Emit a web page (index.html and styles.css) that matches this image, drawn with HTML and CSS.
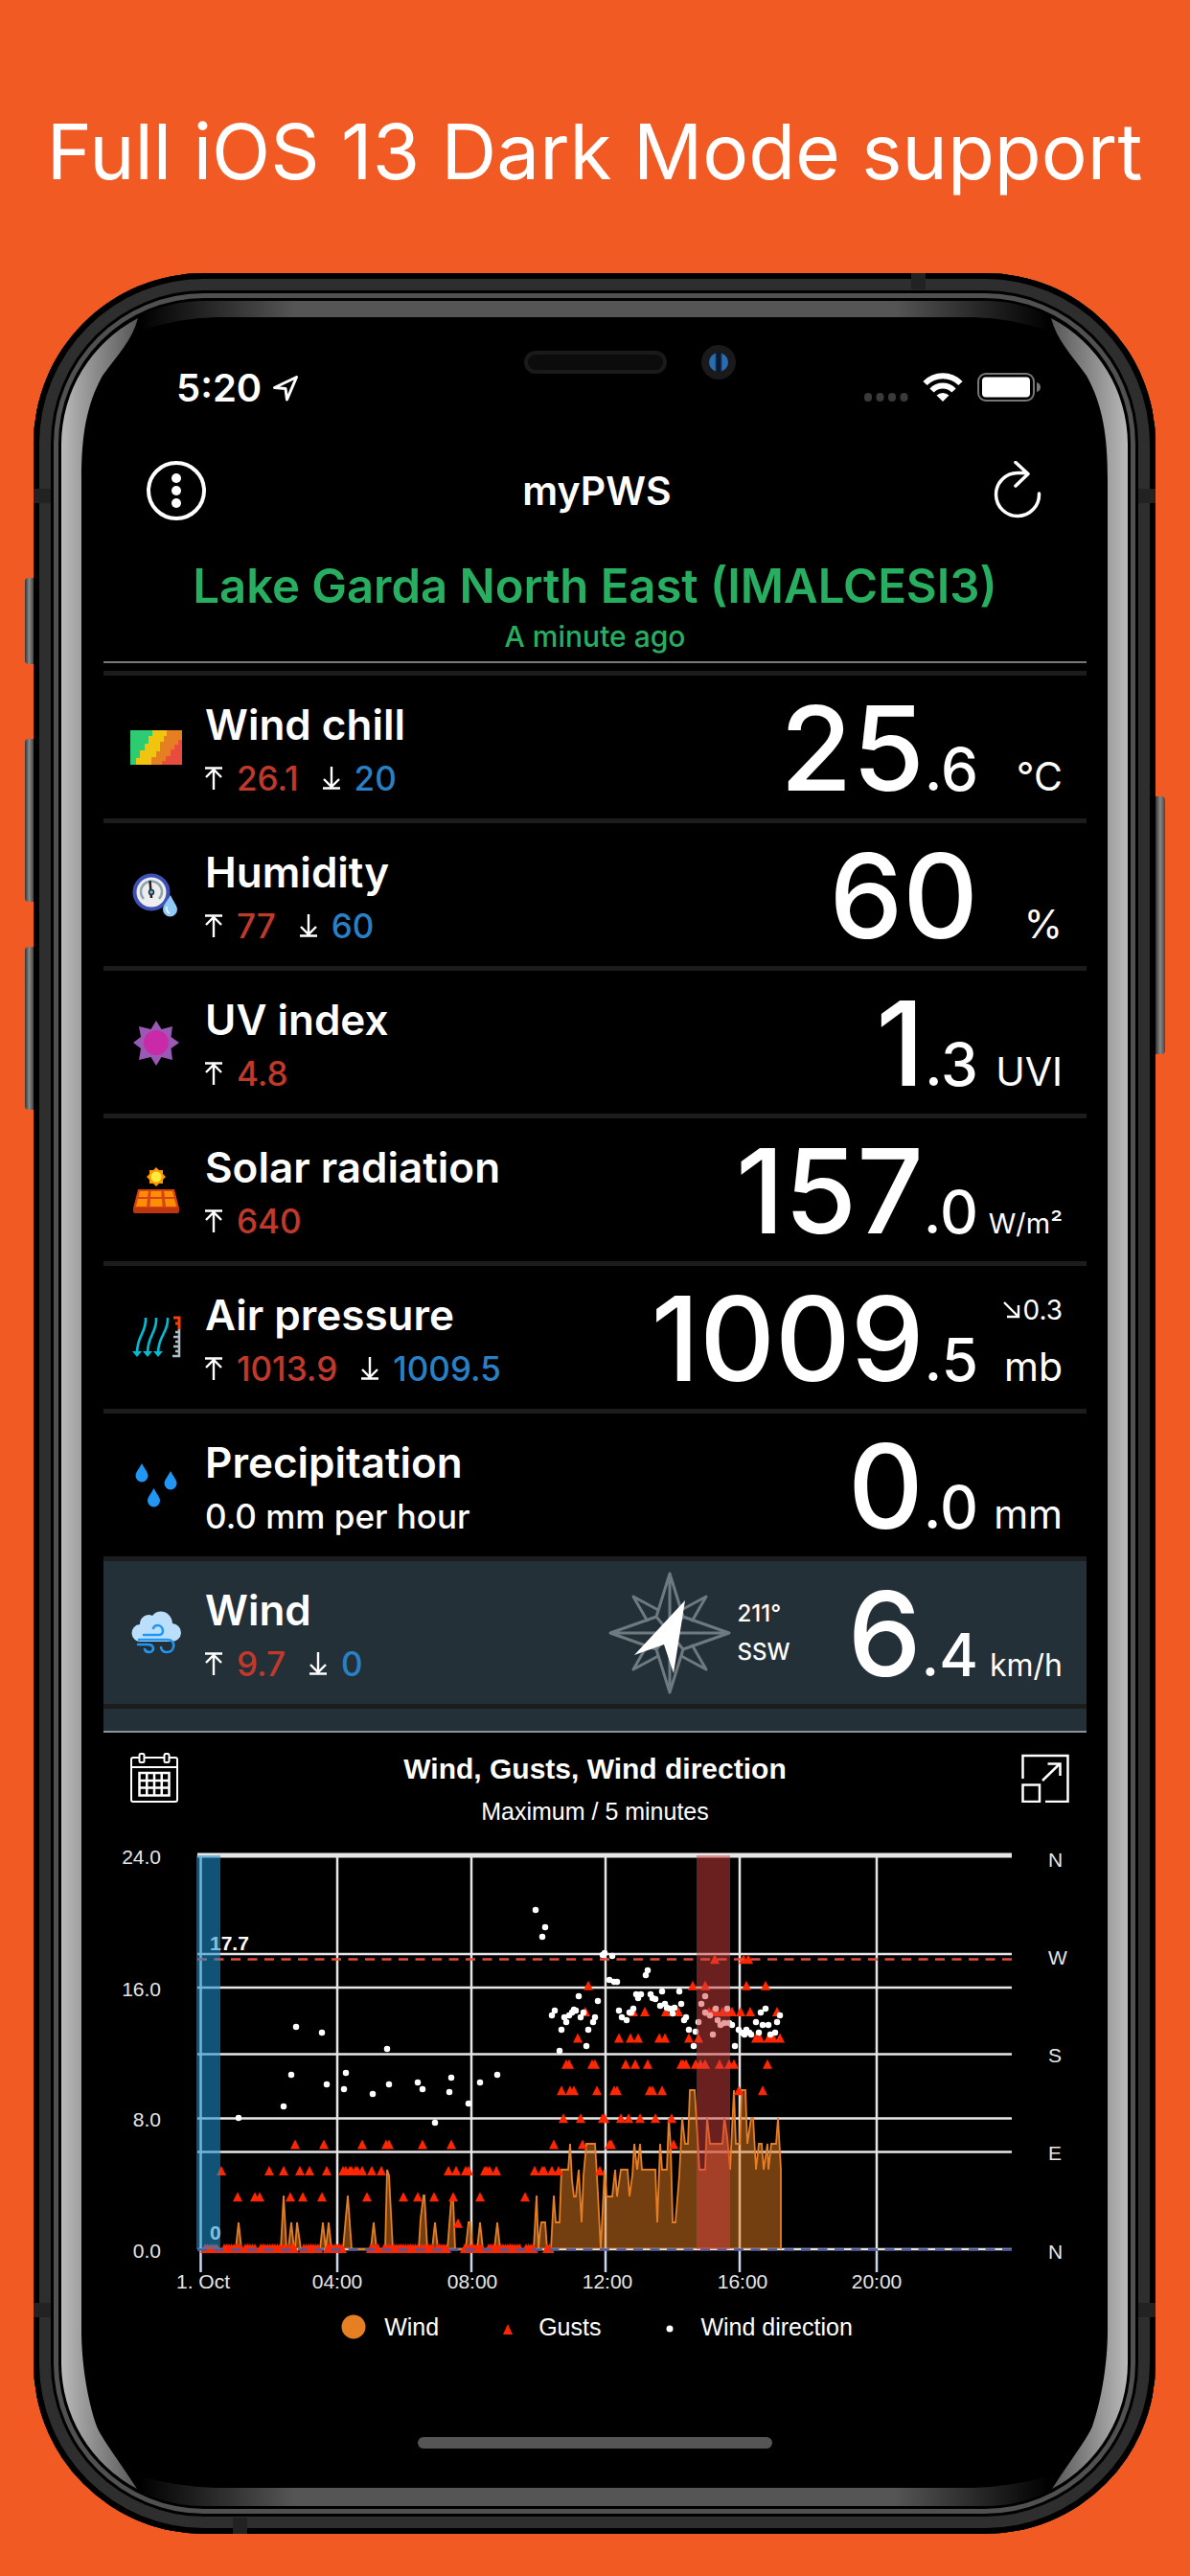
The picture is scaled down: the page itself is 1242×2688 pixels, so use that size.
FILE: index.html
```html
<!DOCTYPE html>
<html lang="en">
<head>
  <meta charset="UTF-8">
  <meta name="viewport" content="width=device-width, initial-scale=1.0">
  <title>myPWS - Dark Mode</title>
  <link rel="stylesheet" href="styles.css">
</head>
<body>
  <!-- Shared icons -->
  <svg class="defs" width="0" height="0" aria-hidden="true">
    <symbol id="max" viewBox="0 0 18 24">
      <path d="M0 1.5h18M9 24V4M1 11l8-8 8 8" fill="none" stroke="#fff" stroke-width="2.4"/>
    </symbol>
    <symbol id="min" viewBox="0 0 18 24">
      <path d="M0 22.5h18M9 0v20M1 13l8 8 8-8" fill="none" stroke="#fff" stroke-width="2.4"/>
    </symbol>
  </svg>

  <h1 class="headline">Full iOS 13 Dark Mode support</h1>

  <div class="phone">
    <span class="side-button mute"></span>
    <span class="side-button volume-up"></span>
    <span class="side-button volume-down"></span>
    <span class="side-button power"></span>

    <!-- Bezel reflections -->
    <svg class="bezel" viewBox="0 0 1171 2360" preserveAspectRatio="none" aria-hidden="true">
      <defs>
        <linearGradient id="band" gradientUnits="userSpaceOnUse" x1="110" x2="1061" y1="0" y2="0">
          <stop offset="0" stop-color="#000"/>
          <stop offset=".17" stop-color="#555"/>
          <stop offset=".83" stop-color="#555"/>
          <stop offset="1" stop-color="#000"/>
        </linearGradient>
        <linearGradient id="left" gradientUnits="userSpaceOnUse" x1="29" x2="110" y1="0" y2="0">
          <stop offset="0" stop-color="#bababa"/>
          <stop offset=".26" stop-color="#9e9e9e"/>
          <stop offset="1" stop-color="#555"/>
        </linearGradient>
        <linearGradient id="right" gradientUnits="userSpaceOnUse" x1="1142" x2="1061" y1="0" y2="0">
          <stop offset="0" stop-color="#bababa"/>
          <stop offset=".26" stop-color="#9e9e9e"/>
          <stop offset="1" stop-color="#555"/>
        </linearGradient>
      </defs>
      <path fill="url(#band)" d="M112 44A149 149 0 0 1 178 29H993A149 149 0 0 1 1059 44V60Q1020 47 981 46H190Q150 47 112 60Z"/>
      <path fill="url(#band)" d="M112 2316A149 149 0 0 0 178 2331H993A149 149 0 0 0 1059 2316V2300Q1020 2311 981 2312H190Q150 2311 112 2300Z"/>
      <path fill="url(#left)" d="M29 178A149 149 0 0 1 109 47C103 70 88 85 72 107C55 138 50 170 50 215V2148C50 2180 56 2220 66 2248C72 2262 90 2285 108 2313A149 149 0 0 1 29 2182Z"/>
      <path fill="url(#right)" d="M1142 178A149 149 0 0 0 1062 47C1068 70 1083 85 1099 107C1116 138 1121 170 1121 215V2148C1121 2180 1115 2220 1105 2248C1099 2262 1081 2285 1063 2313A149 149 0 0 0 1142 2182Z"/>
      <path fill="#222" d="M0 225h18v15H0zM1153 225h18v15h-18zM0 2119h18v15H0zM1153 2119h18v15h-18zM916 0h15v17h-15zM208 2343h15v17h-15z"/>
    </svg>

    <div class="screen">
      <!-- Status bar -->
      <div class="status">
        <div class="clock">
          <span>5:20</span>
          <svg width="28" height="28" viewBox="0 0 28 28"><path d="M25.500 2.500 2.500 13.500 14 14.500 15.500 26Z" fill="none" stroke="#fff" stroke-width="3" stroke-linejoin="round"/></svg>
        </div>
        <div class="sensors">
          <span class="speaker"></span>
          <span class="camera"></span>
        </div>
        <div class="signals">
          <svg width="46" height="30" viewBox="0 0 46 30" fill="#3a3a3a"><rect y="21" width="8" height="9" rx="4"/><rect x="12.500" y="21" width="8" height="9" rx="4"/><rect x="25" y="21" width="8" height="9" rx="4"/><rect x="37.500" y="21" width="8" height="9" rx="4"/></svg>
          <svg width="42" height="30" viewBox="0 0 42 30"><path d="M2.500 11A26 26 0 0 1 39.500 11M9.500 18.500A16 16 0 0 1 32.500 18.500" fill="none" stroke="#fff" stroke-width="6"/><path d="M14.500 23.500A9.500 9.500 0 0 1 27.500 23.500L21 30Z" fill="#fff"/></svg>
          <svg width="66" height="30" viewBox="0 0 66 30"><rect x="1" y="1" width="58" height="28" rx="8" fill="none" stroke="#777" stroke-width="2"/><rect x="5" y="4.500" width="50" height="21" rx="4" fill="#fff"/><path d="M62 10Q66 11 66 15T62 20Z" fill="#777"/></svg>
        </div>
      </div>

      <!-- Navigation -->
      <header class="toolbar">
        <button class="icon-button" type="button" aria-label="Menu">
          <svg width="62" height="62" viewBox="0 0 62 62"><circle cx="31" cy="31" r="29" fill="none" stroke="#fff" stroke-width="4"/><g fill="#fff"><circle cx="31" cy="18" r="5"/><circle cx="31" cy="31" r="5"/><circle cx="31" cy="44" r="5"/></g></svg>
        </button>
        <h2 class="app-title">myPWS</h2>
        <button class="icon-button" type="button" aria-label="Refresh">
          <svg width="62" height="62" viewBox="-7 0 62 62"><path d="M46.500 34A22.500 22.500 0 1 1 24 12.500H34M22 1.500 35 13.500 22 26" fill="none" stroke="#fff" stroke-width="3.500" stroke-linecap="round" stroke-linejoin="round"/></svg>
        </button>
      </header>

      <div class="station">
        <h3 class="station-name">Lake Garda North East (IMALCESI3)</h3>
        <p class="updated">A minute ago</p>
      </div>

      <!-- Readings -->
      <ul class="readings">
        <li class="reading">
          <svg class="icon" width="54" height="54" viewBox="0 0 54 54"><path d="M0 9h54v36H0z" fill="#2ecc71"/><path d="M23 9h31v36H6v-7h4v-8h5v-7h4v-8h4z" fill="#f1c40f"/><path d="M38 9h16v36H22v-8h5v-6h4v-10h4v-6h3z" fill="#e67e22"/><path d="M54 19v26H33v-4h4v-5h5v-7h4v-5h4v-5z" fill="#e74c3c"/></svg>
          <div class="label">
            <h4>Wind chill</h4>
            <p class="range"><svg><use href="#max"/></svg><span class="high">26.1</span><svg class="second"><use href="#min"/></svg><span class="low">20</span></p>
          </div>
          <div class="value">25<small>.6</small></div>
          <div class="unit">°C</div>
        </li>
        <li class="reading">
          <svg class="icon" width="54" height="54" viewBox="0 0 54 54"><circle cx="22" cy="24" r="17.500" fill="#eee" stroke="#3f51b5" stroke-width="4"/><path d="M14 31a11 11 0 1 1 16 0" fill="none" stroke="#90a4ae" stroke-width="2.500"/><path d="M20.500 12 22 30" stroke="#222" stroke-width="2.500"/><circle cx="22" cy="24" r="2.500" fill="#64b5f6" stroke="#263238" stroke-width="1.500"/><path d="M42 27C38 34 34 38 34 42a7.500 7.500 0 0 0 15 0C49 38 45 34 42 27Z" fill="#90caf9"/><path d="M38 39q-1 5 3 7" fill="none" stroke="#e3f2fd" stroke-width="2"/></svg>
          <div class="label">
            <h4>Humidity</h4>
            <p class="range"><svg><use href="#max"/></svg><span class="high">77</span><svg class="second"><use href="#min"/></svg><span class="low">60</span></p>
          </div>
          <div class="value">60</div>
          <div class="unit">%</div>
        </li>
        <li class="reading">
          <svg class="icon" width="54" height="54" viewBox="0 0 54 54"><path d="M27 4 32.500 13 44 10 42.500 21 51 27 42.500 33 44 45 32.500 42 27 51 21.500 42 9 45 11 33 3 27 11 21 9 10 21.500 13Z" fill="#9b59b6"/><circle cx="27" cy="27" r="13" fill="#c82aa8"/></svg>
          <div class="label">
            <h4>UV index</h4>
            <p class="range"><svg><use href="#max"/></svg><span class="high">4.8</span></p>
          </div>
          <div class="value">1<small>.3</small></div>
          <div class="unit">UVI</div>
        </li>
        <li class="reading">
          <svg class="icon" width="54" height="54" viewBox="0 0 54 54"><path d="M27 3 30 6H34V10L37 13 34 16V20H30L27 23 24 20H20V16L17 13 20 10V6H24Z" fill="#ff9800"/><circle cx="27" cy="13" r="5.500" fill="#ffeb3b"/><path d="M8 26h38l5 20H3z" fill="#d84315"/><path d="M3 45h48v4q0 2-2 2H5q-2 0-2-2z" fill="#bf360c"/><path d="M10 28h9l-1 6H8.500zM21.500 28h11v6H21zM35 28h9l1.500 6H36zM8 36h10l-1 8H6zM21 36h12l.500 8h-13zM36 36h10l2 8H37z" fill="#ff8f00"/></svg>
          <div class="label">
            <h4>Solar radiation</h4>
            <p class="range"><svg><use href="#max"/></svg><span class="high">640</span></p>
          </div>
          <div class="value">157<small>.0</small></div>
          <div class="unit compact">W/m²</div>
        </li>
        <li class="reading">
          <svg class="icon" width="54" height="54" viewBox="0 0 54 54"><path d="M16 6C17 22 7 24 7 43M27 6C28 22 18 24 18 43M39 6C40 22 29 24 29 43" fill="none" stroke="#00bcd4" stroke-width="2.600"/><path d="M2 41h10l-5 6zM13 41h10l-5 6zM24 41h10l-5 6z" fill="#00bcd4"/><path d="M45 6H51V18M47 12h4" fill="none" stroke="#ff3d00" stroke-width="3"/><path d="M51 18V46H44M45 26h6M47 21h4M47 31h4M45 36h6M47 41h4" fill="none" stroke="#b0bec5" stroke-width="2.500"/></svg>
          <div class="label">
            <h4>Air pressure</h4>
            <p class="range"><svg><use href="#max"/></svg><span class="high">1013.9</span><svg class="second"><use href="#min"/></svg><span class="low">1009.5</span></p>
          </div>
          <div class="value">1009<small>.5</small></div>
          <div class="unit">
            <span class="trend"><svg width="18" height="18" viewBox="0 0 18 18"><path d="M1 1 15.500 15.500M4 16H16V4" fill="none" stroke="#fff" stroke-width="2.400"/></svg>0.3</span>
            mb
          </div>
        </li>
        <li class="reading">
          <svg class="icon" width="54" height="54" viewBox="0 0 54 54" fill="#2196f3"><path d="M12 4C9 10 5.500 13 5.500 17a6.500 6.500 0 0 0 13 0C18.500 13 15 10 12 4Z"/><path d="M42 12C39 18 35.500 21 35.500 25a6.500 6.500 0 0 0 13 0C48.500 21 45 18 42 12Z"/><path d="M24.500 30C21.500 36 18 39 18 43a6.500 6.500 0 0 0 13 0C31 39 27.500 36 24.500 30Z"/></svg>
          <div class="label">
            <h4>Precipitation</h4>
            <p class="range">0.0 mm per hour</p>
          </div>
          <div class="value">0<small>.0</small></div>
          <div class="unit">mm</div>
        </li>
        <li class="reading selected">
          <svg class="icon" width="54" height="54" viewBox="0 0 54 54"><path d="M11 36A9 9 0 0 1 10 18C10 10 18 6 23 9C29 1 43 4 44 17A9 9 0 0 1 43 36Z" fill="#bbdefb"/><path d="M14 29H30C36 29 35 19 28.500 19Q25 19 24 22M9 34H39C48 34 47 47 38 47Q33 47 32 42M8 39H18C26 39 25 47 20 47Q16 47 15 44" fill="none" stroke="#2196f3" stroke-width="2.600" stroke-linecap="round"/></svg>
          <div class="label">
            <h4>Wind</h4>
            <p class="range"><svg><use href="#max"/></svg><span class="high">9.7</span><svg class="second"><use href="#min"/></svg><span class="low">0</span></p>
          </div>
          <div class="direction">
            <svg width="128" height="128" viewBox="0 0 128 128">
              <g fill="none" stroke="#6e7a80" stroke-width="3" stroke-linejoin="round">
                <path d="M64 2 78 47 126 64 78 81 64 126 50 81 2 64 50 47ZM64 2V126M2 64H126M50 47 78 81M78 47 50 81"/>
                <path d="M52 40 26 26 41 52M76 40 102 26 87 52M52 88 26 102 41 76M76 88 102 102 87 76"/>
              </g>
              <path d="M80 30 68 106 58 76 27 87Z" fill="#fff"/>
            </svg>
            <p>211°<br>SSW</p>
          </div>
          <div class="value">6<small>.4</small></div>
          <div class="unit medium">km/h</div>
        </li>
      </ul>

      <!-- Chart -->
      <section class="chart">
        <div class="chart-head">
          <button class="icon-button" type="button" aria-label="Pick a date">
            <svg width="50" height="52" viewBox="0 0 50 52" fill="none" stroke="#fff" stroke-width="2"><path d="M9 5H3Q1 5 1 7V49Q1 51 3 51H47Q49 51 49 49V7Q49 5 47 5H41M15 5H35M1 15H49"/><rect x="9.500" y="1" width="5" height="9" rx="1.500"/><rect x="35.500" y="1" width="5" height="9" rx="1.500"/><path d="M9.500 21H40.500V44.500H9.500ZM17.250 21V44M25 21V44M32.750 21V44M9.500 29H40M9.500 36.500H40" stroke-width="2.500"/></svg>
          </button>
          <div class="chart-title">
            <h4>Wind, Gusts, Wind direction</h4>
            <p>Maximum / 5 minutes</p>
          </div>
          <button class="icon-button" type="button" aria-label="Full screen">
            <svg width="50" height="52" viewBox="0 0 50 52" fill="none" stroke="#fff" stroke-width="2.500"><path d="M1.500 27V3H48.500V51H25M1.500 33.500H19V51H1.500ZM22 29 40 11.500M27.500 11.500H40.500V24"/></svg>
          </button>
        </div>

        <svg class="plot" viewBox="0 0 1026 476">
          <g stroke="#e6e6e6" stroke-width="2.500">
            <path d="M98 119H948M98 154H948M98 223.500H948M98 290.500H948M98 325.500H948M98 427H948"/>
            <path d="M101.500 16V427M244 16V427M384 16V427M524 16V427M664 16V427M807 16V427"/>
            <path d="M98 16H948" stroke-width="5"/>
          </g>
          <path d="M101.500 427V451M244 427V451M384 427V451M524 427V451M664 427V451M807 427V451" stroke="#ccd6eb" stroke-width="2.500"/>
          <path id="wind" fill="#e67e22" fill-opacity=".5" stroke="#e67e22" stroke-width="1.800"/>
          <path id="gusts" fill="#ff2600"/>
          <path id="directions" stroke="#fff" stroke-width="6.500" stroke-linecap="round"/>
          <path d="M98 124.500H948" stroke="#e74c3c" stroke-width="2.500" stroke-dasharray="10 7.500"/>
          <path d="M98 427.500H948" stroke="#4a5aa0" stroke-width="2.500" stroke-dasharray="10 7.500"/>
          <g class="extreme">
            <text x="111" y="115">17.7</text>
            <text x="111" y="417">0</text>
          </g>
          <rect x="97" y="16" width="25" height="411" fill="#1e90d2" fill-opacity=".57"/>
          <rect x="619" y="16" width="35" height="411" fill="#d64040" fill-opacity=".5"/>
          <g class="axis" text-anchor="end">
            <text x="60" y="25">24.0</text>
            <text x="60" y="163">16.0</text>
            <text x="60" y="299">8.0</text>
            <text x="60" y="436">0.0</text>
          </g>
          <g class="axis">
            <text x="986" y="28">N</text>
            <text x="986" y="130">W</text>
            <text x="986" y="232">S</text>
            <text x="986" y="334">E</text>
            <text x="986" y="437">N</text>
          </g>
          <g class="axis" text-anchor="middle">
            <text x="104" y="468">1. Oct</text>
            <text x="244" y="468">04:00</text>
            <text x="385" y="468">08:00</text>
            <text x="526" y="468">12:00</text>
            <text x="667" y="468">16:00</text>
            <text x="807" y="468">20:00</text>
          </g>
        </svg>

        <ul class="legend">
          <li><svg width="26" height="26" viewBox="0 0 26 26"><circle cx="13" cy="13" r="12.500" fill="#e67e22"/></svg>Wind</li>
          <li><svg width="26" height="26" viewBox="0 0 26 26"><path d="M13 10 18 21H8Z" fill="#ff2600"/></svg>Gusts</li>
          <li><svg width="26" height="26" viewBox="0 0 26 26"><circle cx="13" cy="15" r="3.500" fill="#fff"/></svg>Wind direction</li>
        </ul>
      </section>

      <div class="home-bar"></div>
    </div>
  </div>

  <script src="chart.js"></script>
</body>
</html>
```
FILE: styles.css
```css
* {
  box-sizing: border-box;
  margin: 0;
  padding: 0;
}
body {
  background-color: #f15a22;
  color: #fff;
  font-family: Inter, "Liberation Sans", sans-serif;
  padding: 0 36px 43px 35px;
}
svg {
  display: block;
}
ul {
  list-style: none;
}
.defs {
  position: absolute;
}
.headline {
  padding: 104px 0 73px;
  font-size: 80px;
  font-weight: 400;
  line-height: 108px;
  text-align: center;
  white-space: nowrap;
}

/* Phone */
.phone {
  position: relative;
  padding: 75px 72px 89px 73px;
  border-radius: 178px;
  background-color: #000;
  box-shadow: inset 0 0 0 6px #000, inset 0 0 0 18px #2e2e2e, inset 0 0 0 21px #000, inset 0 0 0 26px #505050;
}
.bezel {
  position: absolute;
  top: 0;
  left: 0;
  width: 100%;
  height: 100%;
}
.side-button {
  position: absolute;
  left: -9px;
  width: 9px;
  border-radius: 4px 0 0 4px;
  background: linear-gradient(90deg, #333, #888 50%, #444);
}
.mute {
  top: 318px;
  height: 90px;
}
.volume-up {
  top: 486px;
  height: 170px;
}
.volume-down {
  top: 703px;
  height: 170px;
}
.power {
  top: 546px;
  left: auto;
  right: -10px;
  width: 10px;
  height: 269px;
  border-radius: 0 4px 4px 0;
}
.screen {
  position: relative;
}

/* Status bar */
.status {
  display: grid;
  grid-template-columns: 1fr auto 1fr;
  height: 69px;
}
.clock {
  display: flex;
  align-self: end;
  align-items: center;
  gap: 11px;
  padding-left: 76px;
  font-size: 40px;
  font-weight: 600;
  line-height: 48px;
}
.sensors {
  display: flex;
  align-self: start;
  align-items: center;
  gap: 36px;
  padding-left: 72px;
}
.speaker {
  width: 149px;
  height: 24px;
  border-radius: 12px;
  border: 4px solid #1a1a1c;
  background-color: #0c0c0d;
}
.camera {
  width: 36px;
  height: 36px;
  border-radius: 50%;
  border: 8px solid #1a1a1c;
  background: linear-gradient(90deg, #2a6cb0 0 30%, #0a1830 40% 60%, #2a6cb0 70%);
}
.signals {
  display: flex;
  align-self: end;
  justify-content: flex-end;
  gap: 15px;
  padding: 0 48px 10px 0;
}

/* Toolbar */
.toolbar {
  display: flex;
  justify-content: space-between;
  align-items: center;
  margin-top: 52px;
  padding: 0 41px 0 45px;
}
.icon-button {
  border: none;
  background: none;
  cursor: pointer;
}
.app-title {
  font-size: 41px;
  font-weight: 600;
  line-height: 62px;
}
.station {
  margin: 41px 0 8px;
  padding-bottom: 9px;
  border-bottom: 2px solid #77777c;
  color: #27ae60;
  text-align: center;
  white-space: nowrap;
}
.station-name {
  font-size: 49px;
  font-weight: 600;
  line-height: 56px;
}
.updated {
  margin-top: 7px;
  font-size: 30px;
  font-weight: 500;
  line-height: 34px;
}

/* Readings */
.readings {
  padding-bottom: 23px;
  border-bottom: 2px solid #8a949b;
  background-color: #243038;
}
.reading {
  display: flex;
  align-items: last baseline;
  height: 154px;
  padding: 0 25px 13px 28px;
  border-top: 5px solid #1c1c1c;
  background-color: #000;
}
.reading.selected {
  height: 159px;
  border-bottom: 5px solid #1c1c1c;
  background-color: #243038;
}
.icon {
  flex: none;
  align-self: center;
  margin: 13px 24px 0 0;
}
.label {
  flex: 1;
  white-space: nowrap;
}
.label h4 {
  font-size: 44px;
  font-weight: 600;
  line-height: 54px;
}
.range {
  display: flex;
  align-items: center;
  gap: 15px;
  margin-top: 6px;
  font-size: 35px;
  font-weight: 500;
  line-height: 46px;
}
.range svg {
  width: 18px;
  height: 24px;
}
.range .second {
  margin-left: 10px;
}
.high {
  color: #c0392b;
}
.low {
  color: #2980c4;
}
.value {
  font-size: 122px;
  font-weight: 500;
  line-height: 120px;
}
.value small {
  font-size: 62px;
  line-height: 1;
}
.unit {
  width: 88px;
  font-size: 41px;
  font-weight: 400;
  line-height: 46px;
  text-align: right;
}
.unit.compact {
  font-size: 29px;
}
.unit.medium {
  font-size: 32px;
}
.trend {
  display: flex;
  justify-content: flex-end;
  align-items: center;
  gap: 2px;
  margin-bottom: 13px;
  font-size: 28px;
}
.direction {
  display: flex;
  align-self: center;
  align-items: center;
  gap: 7px;
  margin: 13px 60px 0 0;
  font-size: 24px;
  font-weight: 500;
  line-height: 40px;
}

/* Chart */
.chart {
  font-family: "Liberation Sans", Arial, sans-serif;
}
.chart-head {
  display: flex;
  justify-content: space-between;
  align-items: flex-start;
  padding: 21px 18px 0 28px;
}
.chart-title {
  padding-right: 10px;
  text-align: center;
}
.chart-title h4 {
  font-size: 30px;
  line-height: 34px;
}
.chart-title p {
  margin-top: 12px;
  font-size: 25px;
  line-height: 30px;
}
.plot {
  width: 100%;
  margin-top: 15px;
}
.axis {
  fill: #e6e6e6;
  font-size: 21px;
}
.extreme {
  fill: #fff;
  font-size: 21px;
  font-weight: bold;
}
.legend {
  display: flex;
  justify-content: center;
  gap: 59px;
  margin-top: 16px;
  padding-left: 4px;
  font-size: 25px;
  line-height: 32px;
}
.legend li {
  display: flex;
  align-items: center;
  gap: 19px;
}
.home-bar {
  width: 36%;
  height: 12px;
  margin: 99px auto 0;
  border-radius: 6px;
  background-color: #555;
}
```
FILE: chart.js
```js
const BASE = 427;
const UNIT = 17.1;

// Wind speed line: x, y pairs
const wind = [
  [98, 427], [138, 427], [141, 399], [144, 427], [185, 427], [188, 371], [191, 427], [193, 427], [196, 399],
  [199, 427], [200, 427], [202, 399], [206, 427], [226, 427], [229, 399], [232, 427], [235, 399], [238, 427],
  [250, 427], [255, 371], [259, 427], [279, 427], [282, 399], [285, 427], [294, 427], [296, 344], [298, 350],
  [302, 427], [329, 427], [331, 395], [334, 371], [335, 371], [338, 427], [343, 427], [346, 399], [349, 427],
  [359, 427], [363, 375], [365, 375], [367, 427], [378, 427], [381, 399], [383, 399], [385, 427], [390, 427],
  [393, 399], [396, 427], [408, 427], [411, 399], [414, 427], [449, 427], [452, 371], [454, 427], [456, 405],
  [457, 399], [461, 399], [463, 427], [467, 427], [470, 371], [472, 399], [476, 399], [478, 344], [485, 344],
  [487, 317], [489, 355], [491, 372], [493, 372], [496, 344], [499, 399], [501, 350], [504, 317], [513, 317],
  [515, 350], [519, 427], [523, 344], [525, 372], [531, 372], [534, 344], [536, 372], [540, 344], [547, 344],
  [549, 372], [552, 350], [554, 317], [557, 344], [560, 317], [562, 344], [576, 344], [578, 399], [581, 317],
  [583, 344], [588, 344], [590, 290], [592, 320], [594, 399], [597, 399], [601, 350], [604, 290], [607, 317],
  [610, 317], [612, 261], [617, 261], [620, 310], [622, 344], [628, 344], [630, 290], [633, 317], [646, 317],
  [648, 290], [651, 310], [654, 344], [658, 261], [660, 317], [664, 317], [666, 261], [670, 261], [672, 317],
  [676, 290], [678, 290], [681, 344], [684, 317], [687, 317], [689, 344], [693, 317], [694, 344], [697, 317],
  [702, 317], [704, 290], [707, 344]
];

// Gusts: speed -> x positions
const gusts = [
  [1.6, [370]],
  [3.2, [140, 158, 163, 195, 208, 228, 275, 313, 328, 345, 365, 393, 440]],
  [4.8, [123, 173, 188, 205, 215, 233, 250, 253, 257, 259, 263, 265, 270, 280, 290, 360, 368, 378, 381, 398, 400,
    403, 410, 450, 458, 460, 468, 475, 518]],
  [6.4, [200, 230, 270, 295, 298, 333, 363, 470, 500, 528, 530, 595]],
  [8, [480, 498, 521, 523, 540, 548, 560, 576, 593]],
  [9.7, [478, 487, 491, 515, 533, 536, 570, 573, 583, 663, 688]],
  [11.3, [483, 486, 510, 513, 545, 555, 568, 603, 605, 608, 618, 623, 628, 643, 653, 658, 693]],
  [12.9, [495, 538, 550, 558, 580, 586, 611, 621, 681, 685, 694, 699, 706]],
  [14.5, [503, 553, 565, 587, 600, 632, 636, 640, 646, 651, 656, 665, 675, 703]],
  [16.1, [506, 615, 628, 671, 691]],
  [17.7, [638, 668, 673]]
];

// Calm stretches: from, to
const calm = [[106, 120], [126, 144], [148, 158], [164, 200], [209, 226], [234, 250], [279, 288], [293, 328],
  [331, 344], [348, 360], [377, 396], [402, 436], [441, 450], [463, 466]];

// Wind direction dots: x, y pairs
const directions = [
  [451, 73], [461, 91], [458, 101], [201, 195], [228, 201], [471, 178], [468, 183], [481, 185], [483, 190],
  [478, 198], [486, 183], [489, 180], [491, 177], [296, 218], [196, 245], [253, 243], [233, 255], [251, 260],
  [281, 265], [298, 255], [188, 278], [141, 290], [328, 253], [333, 260], [363, 248], [361, 263], [346, 295],
  [381, 275], [393, 253], [411, 245], [523, 118], [521, 120], [531, 121], [528, 146], [533, 148], [536, 148],
  [568, 136], [566, 141], [496, 163], [516, 168], [493, 178], [501, 180], [498, 185], [513, 185], [511, 190],
  [506, 198], [538, 178], [541, 185], [546, 188], [549, 180], [553, 176], [551, 180], [556, 161], [558, 165],
  [561, 161], [571, 161], [573, 165], [576, 166], [583, 158], [581, 173], [586, 171], [588, 175], [591, 176],
  [594, 181], [596, 175], [601, 158], [603, 171], [608, 185], [606, 188], [611, 198], [618, 200], [621, 190],
  [624, 171], [628, 163], [628, 180], [633, 183], [639, 176], [641, 188], [644, 193], [636, 203], [648, 191],
  [651, 176], [653, 191], [656, 193], [663, 198], [666, 201], [669, 203], [671, 198], [674, 201], [676, 203],
  [681, 190], [684, 201], [686, 180], [691, 176], [688, 193], [694, 193], [696, 203], [701, 201], [703, 190],
  [706, 183], [476, 220], [504, 215], [616, 215], [659, 215]
];

function triangle(x, y) {
  return `M${x} ${y - 5}l5 10h-10z`;
}

let gustPath = "";
gusts.forEach(([speed, positions]) => {
  positions.forEach(x => {
    gustPath += triangle(x, BASE - speed * UNIT);
  });
});
calm.forEach(([from, to]) => {
  for (let x = from; x <= to; x += 2.5) {
    gustPath += triangle(x, BASE - 1);
  }
});

document.getElementById("wind").setAttribute("d", "M" + wind.map(p => p.join(" ")).join("L") + "V427");
document.getElementById("gusts").setAttribute("d", gustPath);
document.getElementById("directions").setAttribute("d", directions.map(p => `M${p[0]} ${p[1]}h0`).join(""));
```
